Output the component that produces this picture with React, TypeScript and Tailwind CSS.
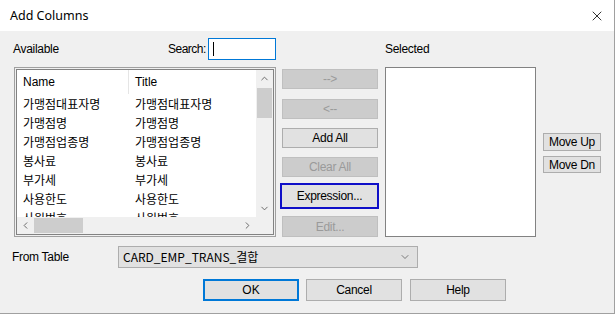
import { ChevronDown, ChevronLeft, ChevronRight, ChevronUp, X } from "lucide-react";

const rows = ["가맹점대표자명", "가맹점명", "가맹점업종명", "봉사료", "부가세", "사용한도", "사원번호"];

const ui = { fontFamily: '"Liberation Sans", Arial, sans-serif' };
const kr = { fontFamily: '"Noto Sans CJK KR", "Liberation Sans", sans-serif' };

function Btn({
  label,
  disabled,
  className = "",
}: {
  label: string;
  disabled?: boolean;
  className?: string;
}) {
  return (
    <div
      className={
        "flex items-center justify-center border text-[12px] tracking-[-0.3px] " +
        (disabled
          ? "border-[#bfbfbf] bg-[#cccccc] text-[#9a9a9a] "
          : "border-[#adadad] bg-[#e1e1e1] text-black ") +
        className
      }
    >
      {label}
    </div>
  );
}

export default function App() {
  return (
    <div
      className="flex h-[314px] w-[615px] flex-col border-r border-b border-[#a0a0a0] bg-[#f0f0f0] text-black"
      style={ui}
    >
      {/* title bar */}
      <div className="flex h-[31px] shrink-0 items-center justify-between bg-white pl-[10px] pr-[9px] pt-px">
        <span className="text-[12.5px]" style={{ fontFamily: '"Noto Sans", sans-serif' }}>
          Add Columns
        </span>
        <X size={16} strokeWidth={1.2} className="text-black" />
      </div>

      {/* labels row */}
      <div className="mt-[7px] flex h-[22px] items-center text-[12px]">
        <span className="ml-[13px] w-[155px] tracking-[-0.3px]">Available</span>
        <span className="w-[37px] whitespace-nowrap text-right tracking-[-0.5px]">Search:</span>
        <div className="ml-[3px] flex h-[22px] w-[68px] items-center border border-[#0078d7] bg-white pl-[4px]">
          <div className="h-[14px] w-px bg-black" />
        </div>
        <span className="ml-[109px] tracking-[-0.3px]">Selected</span>
      </div>

      {/* main row */}
      <div className="mt-[7px] flex h-[170px]">
        {/* available list */}
        <div className="ml-[14px] flex h-[170px] w-[262px] border border-[#a0a0a0] p-px">
          <div className="flex flex-1 flex-col border border-[#828282] bg-white">
            <div className="flex min-h-0 flex-1">
              <div className="flex min-w-0 flex-1 flex-col overflow-hidden">
                <div className="flex h-[24px] shrink-0 items-center text-[12px]">
                  <span className="w-[111px] pl-[6px]">Name</span>
                  <div className="h-[24px] w-px bg-[#e5e5e5]" />
                  <span className="pl-[6px]">Title</span>
                </div>
                {rows.map((r) => (
                  <div key={r} className="flex h-[19px] shrink-0 items-center pt-px text-[12px]" style={kr}>
                    <span className="w-[112px] pl-[6px]">{r}</span>
                    <span className="pl-[6px]">{r}</span>
                  </div>
                ))}
              </div>
              {/* vertical scrollbar */}
              <div className="flex w-[17px] shrink-0 flex-col items-center bg-[#f0f0f0]">
                <div className="flex h-[17px] items-center justify-center">
                  <ChevronUp size={11} strokeWidth={2} className="text-[#606060]" />
                </div>
                <div className="mt-px h-[30px] w-[15px] bg-[#cdcdcd]" />
                <div className="flex-1" />
                <div className="flex h-[17px] items-center justify-center">
                  <ChevronDown size={11} strokeWidth={2} className="text-[#606060]" />
                </div>
              </div>
            </div>
            {/* horizontal scrollbar */}
            <div className="flex h-[17px] shrink-0 bg-[#f0f0f0]">
              <div className="flex w-[17px] items-center justify-center">
                <ChevronLeft size={11} strokeWidth={2} className="text-[#606060]" />
              </div>
              <div className="mt-px h-[15px] w-[49px] bg-[#cdcdcd]" />
              <div className="flex-1" />
              <div className="flex w-[17px] items-center justify-center">
                <ChevronRight size={11} strokeWidth={2} className="text-[#606060]" />
              </div>
              <div className="w-[17px] bg-[#f0f0f0]" />
            </div>
          </div>
        </div>

        {/* middle buttons */}
        <div className="ml-[6px] flex w-[96px] flex-col">
          <Btn label="-->" disabled className="mt-[2px] h-[20px]" />
          <Btn label="<--" disabled className="mt-[10px] h-[20px]" />
          <Btn label="Add All" className="mt-[9px] h-[20px]" />
          <Btn label="Clear All" disabled className="mt-[9px] h-[20px]" />
          <div className="mt-[6px] ml-[-2px] flex h-[26px] w-[99px] items-center justify-center border-2 border-[#0f0fc8] bg-[#e1e1e1] text-[12px] tracking-[-0.3px]">
            Expression...
          </div>
          <Btn label="Edit..." disabled className="mt-[7px] h-[21px]" />
        </div>

        {/* selected list */}
        <div className="ml-[7px] h-[170px] w-[151px] border border-[#828282] bg-white" />

        {/* move buttons */}
        <div className="ml-[7px] flex flex-col">
          <Btn label="Move Up" className="mt-[66px] h-[18px] w-[58px]" />
          <Btn label="Move Dn" className="mt-[5px] h-[17px] w-[58px]" />
        </div>
      </div>

      {/* from table */}
      <div className="mt-[9px] flex h-[22px] items-center text-[12px] tracking-[-0.3px]">
        <span className="ml-[12px] w-[106px]">From Table</span>
        <div className="flex h-[22px] w-[300px] items-center justify-between border border-[#adadad] bg-[#e1e1e1] pl-[4px] pr-[6px] tracking-normal">
          <span style={kr}>CARD_EMP_TRANS_결합</span>
          <ChevronDown size={12} strokeWidth={1.3} className="text-[#404040]" />
        </div>
      </div>

      {/* dialog buttons */}
      <div className="mt-[11px] flex h-[22px] text-[12px]">
        <div className="ml-[203px] flex h-[22px] w-[96px] items-center justify-center border-2 border-[#0078d7] bg-[#e1e1e1]">
          OK
        </div>
        <Btn label="Cancel" className="ml-[7px] h-[22px] w-[96px]" />
        <Btn label="Help" className="ml-[8px] h-[22px] w-[96px]" />
      </div>
    </div>
  );
}
